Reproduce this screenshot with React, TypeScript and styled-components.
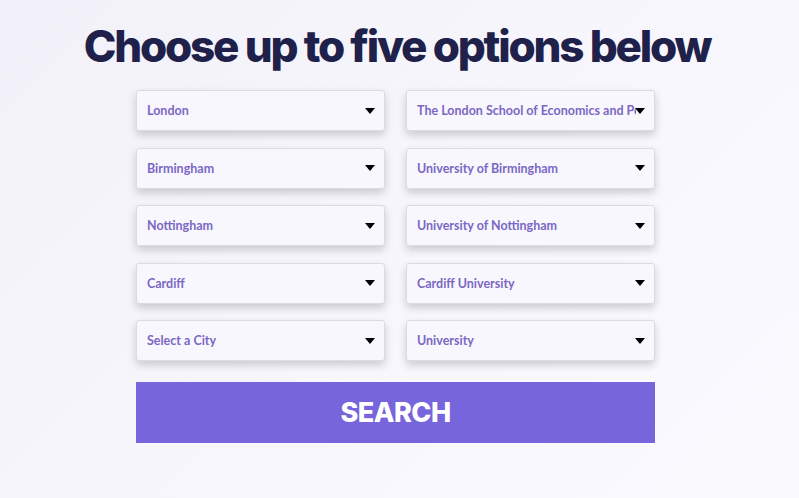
import React from 'react';
import styled, { createGlobalStyle } from 'styled-components';

const GlobalStyle = createGlobalStyle`
  body {
    margin: 0;
    font-family: "Inter", "Liberation Sans", sans-serif;
  }
`;

const Page = styled.div`
  min-height: 498px;
  box-sizing: border-box;
  background: linear-gradient(135deg, #f2f1f9 0%, #f7f6fc 50%, #fbfaff 100%);
  display: flex;
  flex-direction: column;
  align-items: center;
  padding: 18px 8px 0 0;
`;

const Title = styled.h1`
  margin: 0 0 0 3px;
  font-family: "Inter", sans-serif;
  font-weight: 800;
  font-size: 44px;
  line-height: 56px;
  letter-spacing: -2.2px;
  color: #20214a;
`;

const Grid = styled.div`
  margin-top: 16px;
  display: grid;
  grid-template-columns: 249px 249px;
  column-gap: 21px;
  row-gap: 16.5px;
`;

const SelectBox = styled.div<{ $long?: boolean }>`
  position: relative;
  box-sizing: border-box;
  height: 41px;
  background: #f8f7fe;
  border: 1px solid #dcdbe3;
  border-radius: 3px;
  box-shadow: 0 4px 8px rgba(0, 0, 0, 0.18);
  display: flex;
  align-items: center;
  padding: 0 ${(p) => (p.$long ? 18 : 30)}px 0 10px;
  overflow: hidden;
`;

const SelectText = styled.span`
  font-family: "Lato", "Noto Sans", sans-serif;
  font-weight: 700;
  font-size: 12.5px;
  color: #7b68c4;
  white-space: nowrap;
  overflow: hidden;
`;

const Caret = styled.svg`
  position: absolute;
  right: 9px;
  top: 50%;
  margin-top: -3px;
`;

const SearchButton = styled.button`
  margin-top: 21px;
  width: 519px;
  height: 61px;
  border: none;
  background: #7765db;
  color: #ffffff;
  font-family: "Inter", sans-serif;
  font-weight: 800;
  font-size: 27px;
  letter-spacing: -0.5px;
  cursor: pointer;
`;

const rows: [string, string][] = [
  ['London', 'The London School of Economics and Political Science'],
  ['Birmingham', 'University of Birmingham'],
  ['Nottingham', 'University of Nottingham'],
  ['Cardiff', 'Cardiff University'],
  ['Select a City', 'University'],
];

function Dropdown({ label }: { label: string }) {
  return (
    <SelectBox $long={label.length > 30}>
      <SelectText>{label}</SelectText>
      <Caret width="10" height="6" viewBox="0 0 10 6">
        <path d="M0 0 L10 0 L5 6 Z" fill="#000" />
      </Caret>
    </SelectBox>
  );
}

export default function App() {
  return (
    <>
      <GlobalStyle />
      <Page>
        <Title>Choose up to five options below</Title>
        <Grid>
          {rows.map(([city, uni]) => (
            <React.Fragment key={city}>
              <Dropdown label={city} />
              <Dropdown label={uni} />
            </React.Fragment>
          ))}
        </Grid>
        <SearchButton>SEARCH</SearchButton>
      </Page>
    </>
  );
}
